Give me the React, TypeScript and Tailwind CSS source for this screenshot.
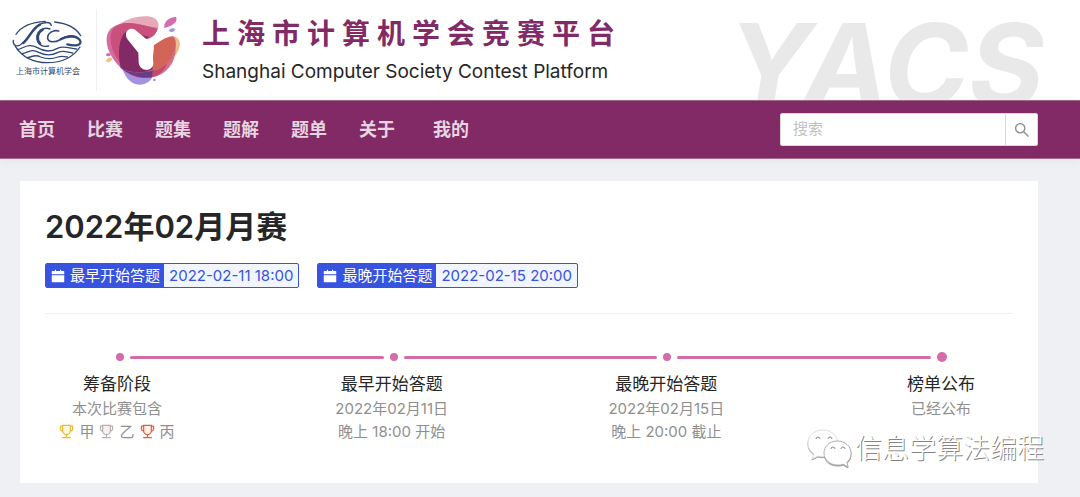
import React from 'react';
import { AiFillCalendar, AiOutlineSearch } from 'react-icons/ai';

const NAV = ['首页', '比赛', '题集', '题解', '题单', '关于'];

const TAGS = [
  { label: '最早开始答题', date: '2022-02-11 18:00' },
  { label: '最晚开始答题', date: '2022-02-15 20:00' },
];

const LEVELS = [
  { label: '甲', color: 'text-[#efb72f]', tint: '#fffbe0' },
  { label: '乙', color: 'text-[#b9afad]', tint: '#f8f1f0' },
  { label: '丙', color: 'text-[#dc5f3c]', tint: '#fff0ea' },
];

function SocietyLogo() {
  return (
    <div className="flex flex-col items-center w-20 pb-2 shrink-0 text-[#2f4a78]">
      <svg
        viewBox="0 0 240 150"
        className="w-20"
        fill="none"
        stroke="currentColor"
        strokeLinecap="round"
        aria-hidden="true"
      >
        <path d="M24 58C40 34 72 21 112 19M140 21C178 25 205 40 218 62" strokeWidth="4" />
        <path d="M22 94C44 128 78 143 118 143C162 143 196 126 216 96" strokeWidth="4" />
        <path d="M16 76C14 90 24 96 36 90C64 74 70 32 106 24C118 21 128 23 130 31" strokeWidth="4" />
        <path d="M46 84C66 68 72 40 96 29" strokeWidth="7" />
        <path d="M126 42C104 34 84 50 87 72C89 88 104 98 122 93" strokeWidth="4" />
        <path d="M104 44C88 52 84 72 96 86" strokeWidth="8" />
        <path d="M152 48C136 44 118 54 119 70C122 84 142 82 156 74C178 60 192 60 206 66" strokeWidth="5" />
        <path d="M158 73C180 60 208 64 216 76C224 92 200 94 178 88" strokeWidth="7" />
        <path d="M28 104C50 98 62 84 88 98C108 110 128 112 148 100C168 90 182 100 206 102" strokeWidth="4" />
        <path d="M42 116C62 112 70 100 92 112C112 122 132 122 150 112C166 104 178 112 194 114" strokeWidth="4" />
        <path d="M58 128C74 126 80 116 98 126C116 133 134 132 150 126C160 122 168 124 178 126" strokeWidth="4" />
      </svg>
      <p className="text-[8px] leading-3 whitespace-nowrap">上海市计算机学会</p>
    </div>
  );
}

function ContestLogo() {
  return (
    <svg viewBox="0 0 246 240" className="w-[82px] shrink-0" aria-hidden="true">
      <path d="M42 48C70 28 112 14 146 20C166 24 176 42 165 60L120 110L60 100Z" fill="#e5a9b8" />
      <path d="M56 150C60 196 86 226 116 224C146 220 158 200 157 170Z" fill="#a393e0" />
      <path d="M180 90C210 70 232 78 234 102C232 134 206 152 180 162Z" fill="#edbd8d" />
      <path d="M14 84C16 54 44 42 70 40C100 38 130 48 168 54L160 72L130 120L110 205C60 190 10 134 14 84Z" fill="#d56ca0" />
      <path d="M26 76C32 50 44 46 64 40C100 34 136 50 167 56C162 76 146 88 134 100L100 190C56 174 22 124 26 76Z" fill="#c9507d" />
      <path d="M150 96C170 90 190 70 216 80C228 120 220 158 190 184C168 204 136 206 108 200L130 150Z" fill="#d5708b" />
      <path d="M153 102C176 98 186 78 216 82C228 96 218 132 200 154C184 170 168 178 152 182Z" fill="#d26458" />
      <path d="M72 64C50 84 46 130 56 174C84 190 130 192 152 178L140 80Z" fill="#822a66" />
      <path d="M56 174C84 192 128 190 157 180C156 192 152 200 150 202C116 208 82 196 56 174Z" fill="#6b3c86" />
      <path d="M152 182C170 180 186 170 196 158C190 180 172 196 150 202Z" fill="#c0496d" />
      <path d="M130 90C150 88 140 96 156 110L152 150L136 140Z" fill="#fff" />
      <path
        d="M72 74C71 60 86 51 99 59L133 87C150 84 162 74 168 56L186 62L212 78C190 80 176 94 159 103C151 109 149 118 151 130L154 158C154 187 113 186 110 158L109 128L80 92C75 86 72 81 72 74Z"
        fill="#fff"
      />
      <path d="M187 54C184 36 202 20 222 21C230 38 208 48 187 54Z" fill="#d56cac" />
      <path d="M200 62C206 52 216 54 219 57C218 66 208 69 200 62Z" fill="#a393e0" />
      <ellipse cx="19" cy="134" rx="7" ry="5" fill="#d56cac" />
      <path d="M12 154C14 142 26 140 31 144C30 154 20 160 12 154Z" fill="#edbd8d" />
      <circle cx="157" cy="210" r="4" fill="#a393e0" />
    </svg>
  );
}

function Trophy({ tint, className }: { tint: string; className: string }) {
  return (
    <svg viewBox="64 64 896 896" className={className} fill="currentColor" aria-hidden="true">
      <path d="M320 480c0 49 19 95 54 130s81 54 130 54h16c49 0 95-19 130-54s54-81 54-130V184H320z" fill={tint} />
      <path d="M868 160h-92v-40c0-4.400-3.600-8-8-8H256c-4.400 0-8 3.600-8 8v40h-92a44 44 0 0 0-44 44v148c0 81.700 60 149.600 138.200 162C265.600 630.200 359 721.800 476 734.500v105.200H280c-17.700 0-32 14.300-32 32V904c0 4.400 3.600 8 8 8h512c4.400 0 8-3.600 8-8v-32.300c0-17.700-14.300-32-32-32H548V734.500C665 721.800 758.400 630.200 773.800 514 852 501.600 912 433.700 912 352V204a44 44 0 0 0-44-44zM184 352V232h64v207.600a92 92 0 0 1-64-87.600zm520 128c0 49.100-19.100 95.400-53.900 130.100-34.800 34.800-81 53.900-130.100 53.900h-16c-49.100 0-95.400-19.100-130.100-53.900-34.800-34.800-53.900-81-53.900-130.100V184h384v296zm136-128c0 41-26.900 75.800-64 87.600V232h64v120z" />
    </svg>
  );
}

function WechatMark() {
  return (
    <svg viewBox="0 0 46 40" className="w-[46px] drop-shadow-[0px_1px_0px_#a0a0a0]" aria-hidden="true">
      <path
        d="M16 1C7 1 1 7 1 14C1 19 3 22 7 25L5 30L11 27C15 28 19 28 22 26C30 24 32 18 31 12C29 5 23 1 16 1Z"
        fill="#fff"
        stroke="#dedede"
      />
      <path
        d="M30 12C22 12 17 18 17 24C17 31 23 36 30 36C33 36 35 36 36 35L41 38L40 33C43 31 44 28 44 24C44 17 38 12 30 12Z"
        fill="#fff"
        stroke="#b0b0b0"
      />
      <path
        d="M9 10a2 2 0 0 1 4 0M21 10a2 2 0 0 1 4 0M24 20a2 2 0 0 1 4 0M34 20a2 2 0 0 1 4 0"
        fill="none"
        stroke="#8a8a8a"
      />
    </svg>
  );
}

function Step({ title, children }: { title: string; children: React.ReactNode }) {
  return (
    <li className="w-36 text-center text-[15px] leading-[23px] text-[#8f8f8f] whitespace-nowrap">
      <h2 className="text-[17px] leading-[26px] text-[#262626]">{title}</h2>
      {children}
    </li>
  );
}

function Line() {
  return <span className="flex-1 h-[3px] rounded-full bg-[#d56caa]"></span>;
}

function Dot() {
  return <span className="size-2 rounded-full bg-[#d56caa]"></span>;
}

export default function App() {
  return (
    <div className="relative min-h-screen bg-[#eff0f4] font-[Inter,'Noto_Sans_CJK_SC',sans-serif] text-[#262626]">
      <header className="flex h-[100px] bg-white overflow-hidden">
        <div className="flex items-center pl-2">
          <SocietyLogo />
          <div className="w-px h-[82px] ml-2 mr-[5px] bg-[#f0f0f0]"></div>
          <ContestLogo />
          <div className="pl-[18px] pt-1 whitespace-nowrap">
            <h1 className="text-[28px] leading-[40px] tracking-[7px] font-bold text-[#822a66]">
              上海市计算机学会竞赛平台
            </h1>
            <p className="text-[19px] leading-[36px]">Shanghai Computer Society Contest Platform</p>
          </div>
        </div>
        <p
          className="ml-auto pr-9 text-[115px] leading-[132px] font-bold italic text-[#e9e9e9] select-none"
          aria-hidden="true"
        >
          YACS
        </p>
      </header>

      <nav className="flex items-center h-[59px] pl-[19px] pr-[42px] bg-[#822a66] border-t border-b border-[#a06a8c] shadow-[0_2px_8px_#e4e5ea]">
        <div className="flex gap-8 text-[18px] font-bold text-[#e6d4e0] whitespace-nowrap">
          {NAV.map((item) => (
            <a key={item} href="#">
              {item}
            </a>
          ))}
          <a href="#" className="ml-1.5">
            我的
          </a>
        </div>
        <form className="flex ml-auto w-[258px] h-[33px] rounded-xs border border-[#d9d9d9] bg-white overflow-hidden">
          <input
            type="text"
            aria-label="搜索"
            placeholder="搜索"
            className="flex-1 min-w-0 px-3 text-[15px] placeholder:text-[#bfbfbf] outline-none"
          />
          <button
            type="button"
            aria-label="搜索"
            className="flex items-center justify-center w-8 border-l border-[#d9d9d9] text-[#8c8c8c]"
          >
            <AiOutlineSearch className="size-[18px]" />
          </button>
        </form>
      </nav>

      <main className="ml-5 mr-[42px] mt-[22px] px-[25px] pt-[25px] pb-10 bg-white">
        <h1 className="text-[31px] leading-[42px] font-semibold">2022年02月月赛</h1>

        <div className="flex gap-[18px] mt-[15px] pb-[25px] border-b border-[#f0f0f0]">
          {TAGS.map((tag) => (
            <div
              key={tag.label}
              className="flex h-[25px] rounded-xs border border-[#3753e0] bg-[#f0f5ff] overflow-hidden text-[15px] leading-[23px] whitespace-nowrap"
            >
              <span className="flex items-center gap-1 px-1 bg-[#3753e0] text-white">
                <AiFillCalendar className="size-4" />
                {tag.label}
              </span>
              <time className="px-[5px] text-[#3753e0]">{tag.date}</time>
            </div>
          ))}
        </div>

        <div className="flex items-center gap-[6px] h-[10px] mt-[38px] pl-[71px] pr-[66px]" aria-hidden="true">
          <Dot />
          <Line />
          <Dot />
          <Line />
          <Dot />
          <Line />
          <span className="size-[10px] rounded-full bg-[#d56caa]"></span>
        </div>

        <ol className="flex justify-between mt-[9px]">
          <Step title="筹备阶段">
            <p>本次比赛包含</p>
            <p className="flex items-center justify-center gap-[5px]">
              {LEVELS.map((level) => (
                <React.Fragment key={level.label}>
                  <Trophy tint={level.tint} className={`w-[15px] ${level.color}`} />
                  {level.label}
                </React.Fragment>
              ))}
            </p>
          </Step>
          <Step title="最早开始答题">
            <p>2022年02月11日</p>
            <p>晚上 18:00 开始</p>
          </Step>
          <Step title="最晚开始答题">
            <p>2022年02月15日</p>
            <p>晚上 20:00 截止</p>
          </Step>
          <Step title="榜单公布">
            <p>已经公布</p>
          </Step>
        </ol>
      </main>

      <div className="absolute right-9 bottom-7 flex items-center gap-[2px]">
        <WechatMark />
        <p className="text-[27px] leading-10 font-light text-white whitespace-nowrap [text-shadow:1px_1px_0px_#858585]">
          信息学算法编程
        </p>
      </div>
    </div>
  );
}
